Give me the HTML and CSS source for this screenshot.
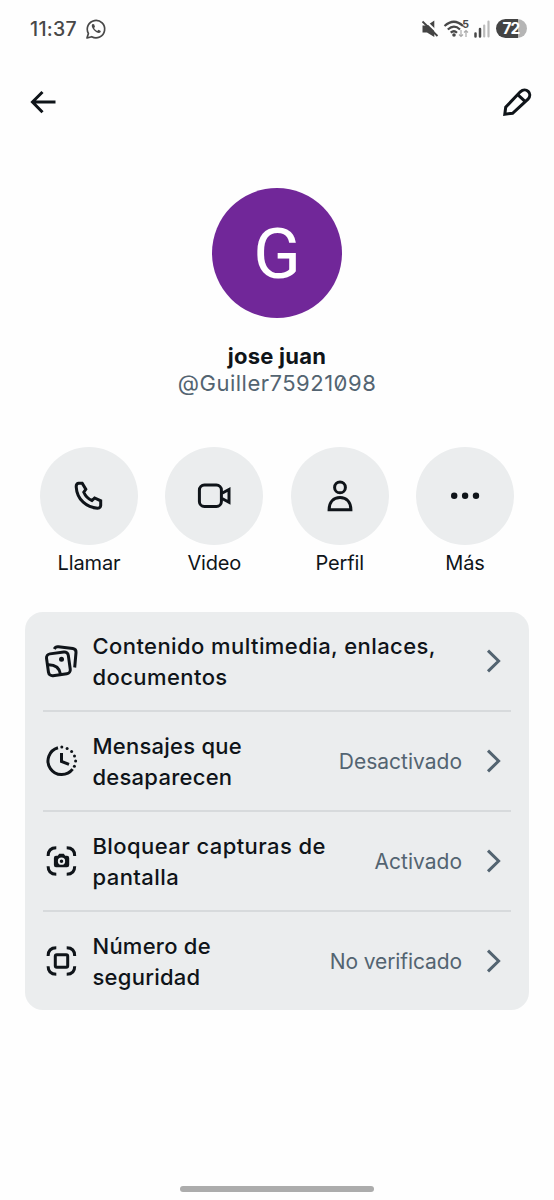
FILE: index.html
```html
<!DOCTYPE html>
<html lang="es">
<head>
<meta charset="utf-8">
<title>jose juan</title>
<link rel="stylesheet" href="styles.css">
</head>
<body>
<div class="screen">
  <div class="status">
    <span class="time">11:37</span>
    <svg class="wa" width="22" height="22" viewBox="0 0 22 22"><path d="M2 20 L3.4 15.4 A8.7 8.7 0 1 1 6.7 18.7 Z" fill="none" stroke="#484848" stroke-width="1.7" stroke-linejoin="round"/><path d="M7.5 6 C6.2 7 6.5 9.2 8.8 11.9 C11.5 14.7 14 15.8 15.5 14.2 L15.8 13 L13.5 11.8 L12.3 13 C11 12.5 9.7 11.2 9.1 9.9 L10 8.7 L9.1 6.3 Z" fill="#484848"/></svg>
    <svg class="signals" width="70" height="24" viewBox="420 16 70 24">
      <path d="M422.5 24.5 H427 L434.3 19.5 V36 L427 31.5 H422.5 Z" fill="#444"/><path d="M424 18.5 L440 34" stroke="#fff" stroke-width="2.2"/><path d="M422.5 20.5 L437.5 35" stroke="#444" stroke-width="1.8"/>
      <g fill="none" stroke="#484848" stroke-width="2.2"><path d="M444.5 25 Q454 16.5 463 25"/><path d="M447.8 28.5 Q454 22.8 460 28.5"/><path d="M450.7 31.7 Q454 28.8 457 31.7"/></g><circle cx="454" cy="34" r="1.8" fill="#484848"/>
      <path d="M461 29 V35.5 M459 33.5 L461 35.5 L463 33.5 M466 36 V29.5 M464 31.5 L466 29.5 L468 31.5" fill="none" stroke="#aaa" stroke-width="1.2"/>
      <text class="band" x="462.3" y="26.6">5</text>
      <path d="M475.5 32.5 V35.5 M480 28 V35.5" stroke="#484848" stroke-width="2.5" stroke-linecap="round"/><path d="M484.2 24.5 V35.5 M488.5 20.5 V35.5" stroke="#bbb" stroke-width="2.2" stroke-linecap="round"/>
    </svg>
    <span class="battery">72</span>
  </div>
  <div class="header">
    <svg width="28" height="28" viewBox="29 88 28 28"><path d="M55.5 102 H33 M42.5 92 L32.5 102 L42.5 112.3" fill="none" stroke="#0f1419" stroke-width="3"/></svg>
    <svg width="34" height="34" viewBox="500 85 34 34"><path d="M504.8 114.2 L505.7 107.2 L520.3 91.8 C525.8 86.5 533.2 93.5 528 99.2 L512.6 113.3 Z M517.7 94.7 L525.3 101.7" fill="none" stroke="#0f1419" stroke-width="3"/></svg>
  </div>
  <div class="avatar">G</div>
  <div class="name"><span>jose juan</span></div>
  <div class="handle"><span>@Guiller75921098</span></div>
  <div class="actions">
    <div class="action"><svg class="disc" viewBox="0 0 98 98"><path d="M38.5 36.3 H42.2 L45.8 42.3 L43.8 45.2 Q46.2 51 52 53.5 L54.6 51 L60.7 53.8 V58.5 Q60.5 61.2 57.5 61.2 C47 60.5 37 53 36.2 39.8 Q36.1 36.8 38.5 36.3 Z"/></svg><span>Llamar</span></div>
    <div class="action"><svg class="disc" viewBox="0 0 98 98"><rect x="34.4" y="38" width="22" height="21.4" rx="5"/><path d="M57 46.3 L64 42.5 V55.3 L57 51.5"/></svg><span>Video</span></div>
    <div class="action"><svg class="disc" viewBox="0 0 98 98"><circle cx="49" cy="40.4" r="5.4"/><path d="M38.1 62.7 C38.2 54.8 42.5 50.6 49 50.6 S59.8 54.8 59.9 62.7 Z"/></svg><span>Perfil</span></div>
    <div class="action"><svg class="disc dots" viewBox="0 0 98 98"><circle cx="38.2" cy="48.8" r="3.2"/><circle cx="49.1" cy="48.8" r="3.2"/><circle cx="60" cy="48.8" r="3.2"/></svg><span>Más</span></div>
  </div>
  <div class="card">
    <div class="row">
      <svg class="icon" viewBox="0 0 36 36"><rect x="4.4" y="9.8" width="22" height="22" rx="4" transform="rotate(-8 15.4 20.8)"/><path d="M11.3 6 Q12.6 3.4 15.4 3.8 L29.8 5.6 Q33.3 6.2 33 9.5 L31.7 24.5"/><path d="M4.5 21.8 C12 21.5 16.5 25 17.5 31.2"/><circle class="solid" cx="18.5" cy="16.3" r="2.5"/></svg>
      <span class="title wide">Contenido multimedia, enlaces,<br>documentos</span>
      <svg class="chev" viewBox="0 0 16 24"><path d="M2 1.6 L12.6 12 L2 22.4"/></svg>
    </div>
    <div class="row">
      <svg class="icon" viewBox="0 0 36 36"><path d="M15 4.7 A13.7 13.7 0 1 0 29.6 26.2"/><path d="M18.5 10 V18.5 L26 21.4"/><g class="solid"><circle cx="18.8" cy="4.1" r="1.5"/><circle cx="24.1" cy="5.4" r="1.5"/><circle cx="28.6" cy="8.6" r="1.5"/><circle cx="31.5" cy="12.9" r="1.5"/><circle cx="32.6" cy="18" r="1.5"/><circle cx="31.4" cy="23.2" r="1.5"/></g></svg>
      <span class="title">Mensajes que<br>desaparecen</span>
      <span class="value">Desactivado</span>
      <svg class="chev" viewBox="0 0 16 24"><path d="M2 1.6 L12.6 12 L2 22.4"/></svg>
    </div>
    <div class="row">
      <svg class="icon" viewBox="0 0 36 36"><path d="M5.1 13 Q5.1 4.8 13.3 4.8 M23.7 4.8 Q31.7 4.8 31.7 13 M31.7 23.2 Q31.7 31.2 23.7 31.2 M13.3 31.2 Q5.1 31.2 5.1 23.2"/><path class="solid" d="M13 12.8 H14.7 L16.2 10.8 H20.8 L22.2 12.8 H24 Q26.2 12.8 26.2 15 V22 Q26.2 24.2 24 24.2 H13 Q10.9 24.2 10.9 22 V15 Q10.9 12.8 13 12.8 Z"/><circle class="lens" cx="18.5" cy="18.2" r="2.7"/></svg>
      <span class="title wide">Bloquear capturas de<br>pantalla</span>
      <span class="value">Activado</span>
      <svg class="chev" viewBox="0 0 16 24"><path d="M2 1.6 L12.6 12 L2 22.4"/></svg>
    </div>
    <div class="row">
      <svg class="icon" viewBox="0 0 36 36"><path d="M5.1 13 Q5.1 4.8 13.3 4.8 M23.7 4.8 Q31.7 4.8 31.7 13 M31.7 23.2 Q31.7 31.2 23.7 31.2 M13.3 31.2 Q5.1 31.2 5.1 23.2"/><rect x="12.3" y="11.8" width="12.4" height="12.4" rx="1.5"/></svg>
      <span class="title">Número de<br>seguridad</span>
      <span class="value narrow">No verificado</span>
      <svg class="chev" viewBox="0 0 16 24"><path d="M2 1.6 L12.6 12 L2 22.4"/></svg>
    </div>
  </div>
  <div class="homebar"></div>
</div>
</body>
</html>
```
FILE: styles.css
```css
* { box-sizing: border-box; }
body { margin: 0; background: #fff; }
svg { display: block; flex: none; }
.screen {
  width: 554px; height: 1200px;
  display: flex; flex-direction: column;
  background: #fefefe; color: #0f1419;
  font-family: Inter, "Noto Sans", sans-serif;
  overflow: hidden;
}
.status { height: 57px; flex: none; display: flex; align-items: center; padding: 0 27px 0 30px; }
.time { width: 55px; font: 500 19.5px/24px Inter, sans-serif; letter-spacing: .3px; color: #484848; }
.signals { margin-left: auto; }
.band { font: 700 10.5px Inter, sans-serif; fill: #484848; }
.battery {
  width: 31px; height: 19px; margin-left: 6px; padding-right: 1px;
  border-radius: 10px; background: linear-gradient(90deg, #444 72%, #b5b5b5 72%);
  color: #fff; font: 700 15.5px/19px Inter, sans-serif; letter-spacing: -.8px; text-align: center;
}
.header { height: 90px; flex: none; display: flex; justify-content: space-between; align-items: center; padding: 0 20px 0 29px; }
.avatar {
  width: 130px; height: 130px; flex: none; margin: 41px auto 0; padding-top: 1px;
  border-radius: 50%; background: #712799; color: #fff;
  font: 400 70px/131px Roboto, sans-serif; text-align: center;
}
.name { height: 28px; margin-top: 24px; font-size: 22px; line-height: 28px; font-weight: 700; text-align: center; letter-spacing: .25px; }
.handle { height: 28px; font-size: 22px; line-height: 27px; color: #536471; text-align: center; letter-spacing: .5px; font-feature-settings: "zero"; }
.actions { display: flex; justify-content: space-between; padding: 0 40px; margin-top: 49px; }
.action { width: 98px; display: flex; flex-direction: column; align-items: center; font-size: 20px; line-height: 28px; letter-spacing: -.15px; white-space: nowrap; }
.action span { margin-top: 4px; }
.disc { width: 98px; height: 98px; border-radius: 50%; background: #ebedee; fill: none; stroke: #0f1419; stroke-width: 3; }
.dots { fill: #0f1419; stroke: none; }
.card { margin: 35px 25px 0; padding: 0 18px; height: 398px; border-radius: 18px; background: #ebedee; }
.row { height: 100px; display: flex; align-items: center; border-bottom: 2px solid #d7dadc; }
.row:last-child { height: 98px; border-bottom: 0; }
.icon { width: 36px; height: 36px; margin-right: 13.5px; fill: none; stroke: #0f1419; stroke-width: 3; }
.solid { fill: #0f1419; stroke: none; }
.lens { fill: #0f1419; stroke: #ebedee; stroke-width: 1.9; }
.title { flex: 1; padding-top: 1px; font-size: 22px; line-height: 31px; font-weight: 500; letter-spacing: .25px; white-space: nowrap; }
.wide { letter-spacing: .42px; }
.value { padding-top: 2px; font-size: 21px; line-height: 30px; color: #536471; white-space: nowrap; }
.narrow { letter-spacing: -.1px; }
.chev { width: 16px; height: 24px; margin: 0 9px 0 24px; fill: none; stroke: #536471; stroke-width: 3; }
.homebar { width: 194px; height: 6px; margin: 176px auto 0; flex: none; border-radius: 3px; background: #acacac; }
```
